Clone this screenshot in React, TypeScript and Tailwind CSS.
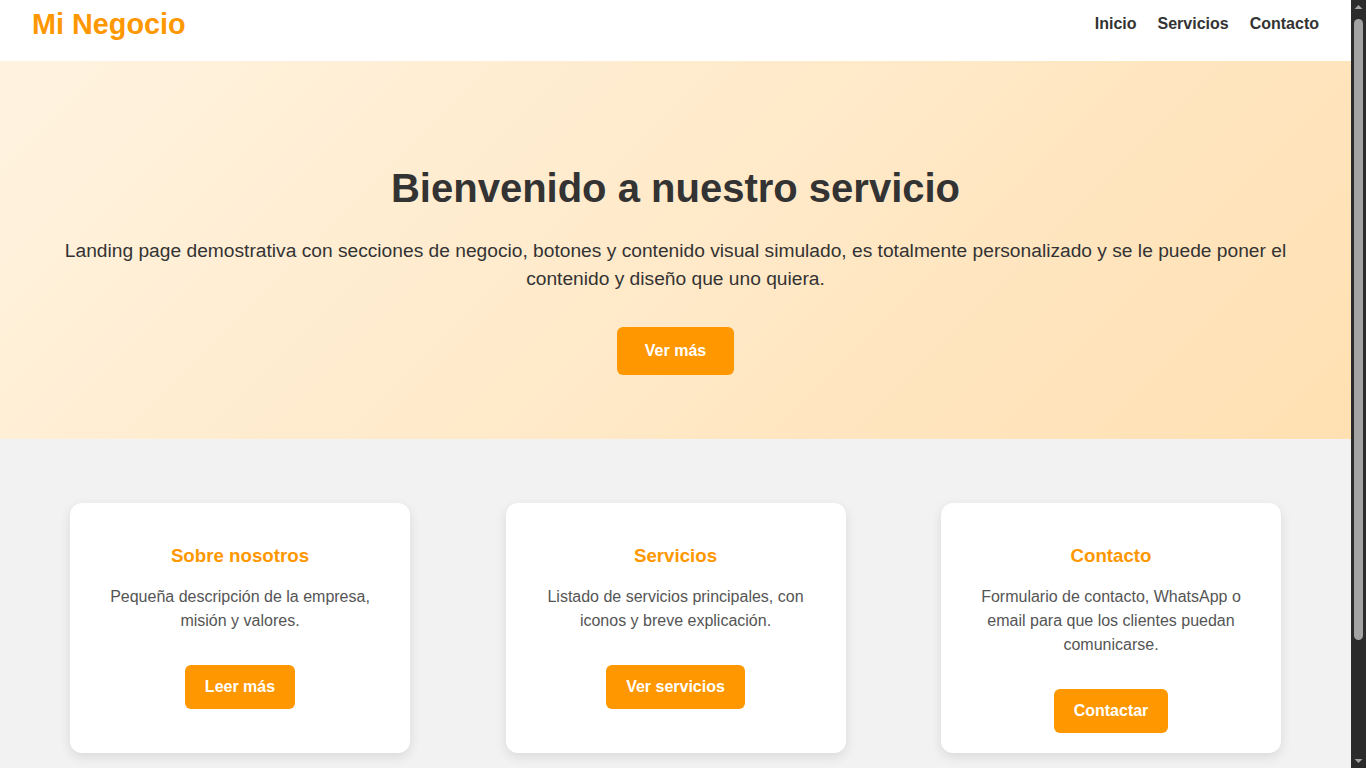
const cards = [
  {
    title: "Sobre nosotros",
    text: "Pequeña descripción de la empresa, misión y valores.",
    action: "Leer más",
  },
  {
    title: "Servicios",
    text: "Listado de servicios principales, con iconos y breve explicación.",
    action: "Ver servicios",
  },
  {
    title: "Contacto",
    text: "Formulario de contacto, WhatsApp o email para que los clientes puedan comunicarse.",
    action: "Contactar",
  },
];

function Header() {
  return (
    <header className="flex items-start justify-between bg-white h-[61px] px-[32px] pt-[8px]">
      <h1 className="text-[28.8px] leading-[33px] font-bold text-[#ff9800]">Mi Negocio</h1>
      <nav className="flex gap-[21px] pt-[5.5px] text-[16px] leading-[19px] font-bold text-[#333]">
        <a href="#">Inicio</a>
        <a href="#">Servicios</a>
        <a href="#">Contacto</a>
      </nav>
    </header>
  );
}

function Hero() {
  return (
    <section className="bg-[linear-gradient(135deg,#fff3e0,#ffe0b2)] text-center px-[40px] pt-[104px] pb-[64px]">
      <h2 className="text-[40px] leading-[46px] font-bold text-[#333]">Bienvenido a nuestro servicio</h2>
      <p className="mt-[25.5px] text-[19.2px] leading-[28.8px] text-[#333]">
        Landing page demostrativa con secciones de negocio, botones y contenido visual simulado, es totalmente
        personalizado y se le puede poner el contenido y diseño que uno quiera.
      </p>
      <button className="mt-[32.5px] inline-flex items-center justify-center w-[117px] h-[48px] rounded-[6px] bg-[#ff9800] text-white text-[16px] font-bold">
        Ver más
      </button>
    </section>
  );
}

function Card({ title, text, action }: { title: string; text: string; action: string }) {
  return (
    <div className="w-[340px] bg-white rounded-[12px] shadow-[0_4px_12px_rgba(0,0,0,0.1)] text-center px-[30px] pt-[20px] pb-[20px]">
      <h3 className="mt-[22px] text-[18.72px] leading-[21.5px] font-bold text-[#ff9800]">{title}</h3>
      <p className="mt-[18.7px] text-[16px] leading-[24px] text-[#555]">{text}</p>
      <button className="mt-[32.5px] inline-flex items-center h-[44px] px-[20px] rounded-[6px] bg-[#ff9800] text-white text-[16px] font-bold">
        {action}
      </button>
    </div>
  );
}

// the browser's own scrollbar does not show in the screenshot, so draw one
function Scrollbar() {
  return (
    <div className="w-[15px] shrink-0 bg-[#2b2b2b] flex flex-col items-center">
      <svg width="15" height="15" viewBox="0 0 15 15" className="shrink-0">
        <path d="M3.5 9 L7.5 5 L11.5 9 Z" fill="#a3a3a3" />
      </svg>
      <div className="mt-[4px] w-[9px] h-[621px] rounded-full bg-[#a3a3a3]" />
      <div className="flex-1" />
      <svg width="15" height="15" viewBox="0 0 15 15" className="shrink-0">
        <path d="M3.5 6 L7.5 10 L11.5 6 Z" fill="#a3a3a3" />
      </svg>
    </div>
  );
}

export default function App() {
  return (
    <div className="flex h-screen overflow-hidden font-['Liberation_Sans',Arial,sans-serif]">
      <main className="flex-1 min-w-0 bg-[#f2f2f2]">
        <Header />
        <Hero />
        <section className="flex justify-between px-[70px] py-[64px] bg-[#f2f2f2]">
          {cards.map((c) => (
            <Card key={c.title} {...c} />
          ))}
        </section>
      </main>
      <Scrollbar />
    </div>
  );
}
